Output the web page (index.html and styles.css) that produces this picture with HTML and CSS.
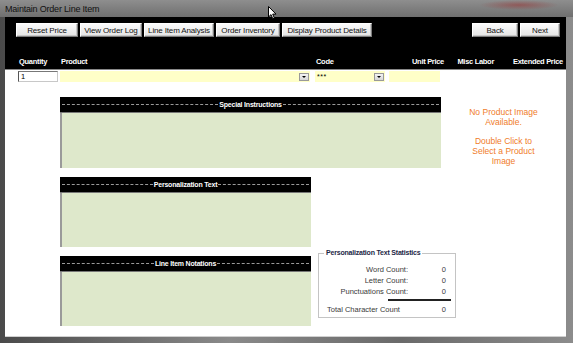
FILE: index.html
```html
<!DOCTYPE html>
<html lang="en">
<head>
    <meta charset="UTF-8">
    <meta name="viewport" content="width=device-width, initial-scale=1.0">
    <title>Maintain Order Line Item</title>
    <link rel="stylesheet" href="styles.css">
</head>
<body>
    <div class="window">
        <div class="titlebar">
            <span class="title">Maintain Order Line Item</span>
            <span class="close-glow"></span>
        </div>
        <div class="client">
            <div class="toolbar">
                <div class="button-row">
                    <div class="button-group">
                        <button class="btn btn-reset">Reset Price</button>
                        <button class="btn btn-log">View Order Log</button>
                        <button class="btn btn-analysis">Line Item Analysis</button>
                        <button class="btn btn-inventory">Order Inventory</button>
                        <button class="btn btn-details">Display Product Details</button>
                    </div>
                    <div class="button-group nav-group">
                        <button class="btn btn-back">Back</button>
                        <button class="btn btn-next">Next</button>
                    </div>
                </div>
                <div class="field-grid label-row">
                    <span class="lbl">Quantity</span>
                    <span class="lbl">Product</span>
                    <span class="lbl">Code</span>
                    <span class="lbl lbl-right">Unit Price</span>
                    <span class="lbl lbl-right">Misc Labor</span>
                    <span class="lbl lbl-right">Extended Price</span>
                </div>
            </div>

            <div class="field-grid input-row">
                <div class="field field-qty">1</div>
                <div class="field field-combo field-product">
                    <span class="combo-text"></span>
                    <span class="combo-arrow"></span>
                </div>
                <div class="field field-combo field-code">
                    <span class="combo-text">***</span>
                    <span class="combo-arrow"></span>
                </div>
                <div class="field field-price"></div>
            </div>

            <div class="content">
                <div class="panel panel-special">
                    <div class="panel-head"><span class="dash"></span><span class="panel-title">Special Instructions</span><span class="dash"></span></div>
                    <div class="panel-body"></div>
                </div>

                <div class="image-note">
                    <p>No Product Image Available.</p>
                    <p>Double Click to Select a Product Image</p>
                </div>

                <div class="panel panel-personal">
                    <div class="panel-head"><span class="dash"></span><span class="panel-title">Personalization Text</span><span class="dash"></span></div>
                    <div class="panel-body"></div>
                </div>

                <div class="panel panel-notes">
                    <div class="panel-head"><span class="dash"></span><span class="panel-title">Line Item Notations</span><span class="dash"></span></div>
                    <div class="panel-body"></div>
                </div>

                <div class="stats">
                    <div class="stats-title">Personalization Text Statistics</div>
                    <div class="stats-grid">
                        <span class="stat-label">Word Count:</span><span class="stat-value">0</span>
                        <span class="stat-label">Letter Count:</span><span class="stat-value">0</span>
                        <span class="stat-label">Punctuations Count:</span><span class="stat-value">0</span>
                        <span class="stat-rule"></span>
                        <span class="stat-label stat-total">Total Character Count</span><span class="stat-value">0</span>
                    </div>
                </div>
            </div>
        </div>

        <svg class="cursor" width="9" height="14" viewBox="0 0 9 14">
            <path d="M0.5 0.5 L0.5 11 L3 8.6 L4.8 12.8 L6.4 12.1 L4.7 8.1 L8 8.1 Z" fill="#fff" stroke="#000" stroke-width="1"/>
        </svg>
    </div>
</body>
</html>
```

FILE: styles.css
```css
body {
    margin: 0;
    font-family: 'Liberation Sans', Arial, sans-serif;
    background-color: #fff;
}

.window {
    position: relative;
    width: 573px;
    height: 343px;
    display: flex;
    flex-direction: column;
    box-sizing: border-box;
    padding: 0 7px 6px 5px;
    background: linear-gradient(to right, #4a4a4a, #8a8a8a 40%, #6a6a6a 70%, #8c8c8c);
}

.titlebar {
    position: relative;
    height: 17px;
    display: flex;
    align-items: center;
    margin: 0 -7px 0 -5px;
    padding-left: 5px;
    background: linear-gradient(to bottom, #8e8e8e, #6f6f6f);
}

.title {
    font-size: 9px;
    color: #111;
    letter-spacing: -0.2px;
}

.close-glow {
    position: absolute;
    right: 14px;
    top: 0;
    width: 80px;
    height: 10px;
    background: radial-gradient(ellipse at center, rgba(150, 60, 60, 0.6), rgba(150, 60, 60, 0) 70%);
}

.client {
    flex: 1;
    display: flex;
    flex-direction: column;
    background-color: #fff;
    border-bottom: 1px solid #d0d0d0;
}

/* Black header */
.toolbar {
    background-color: #000;
    height: 52px;
    display: flex;
    flex-direction: column;
    border-bottom: 1px solid #888;
}

.button-row {
    display: flex;
    justify-content: space-between;
    padding: 6px 6px 0 11px;
}

.button-group {
    display: flex;
    gap: 2px;
}

.btn {
    height: 14px;
    padding: 0;
    font-family: 'Liberation Sans', Arial, sans-serif;
    font-size: 8px;
    letter-spacing: -0.15px;
    color: #111;
    background: linear-gradient(to bottom, #fbfbfb, #e4e4e4);
    border: 1px solid #fff;
    border-right-color: #7c7c7c;
    border-bottom-color: #7c7c7c;
    box-shadow: inset -1px -1px 0 #c8c8c8;
}

.btn-reset { width: 62px; }
.btn-log { width: 62px; }
.btn-analysis { width: 70px; }
.btn-inventory { width: 64px; }
.btn-details { width: 90px; }
.btn-back { width: 46px; }
.btn-next { width: 40px; }

.field-grid {
    display: grid;
    grid-template-columns: 42px 255px 74px 55px 50px 69px;
    padding-left: 13px;
}

.label-row {
    margin-top: auto;
    padding-bottom: 3px;
}

.lbl {
    font-size: 7.5px;
    font-weight: bold;
    color: #fff;
    line-height: 9px;
    letter-spacing: -0.3px;
    padding-left: 1px;
}

.lbl-right {
    text-align: right;
}

/* Inputs */
.input-row {
    margin-top: 1px;
    height: 11px;
}

.field {
    box-sizing: border-box;
    height: 11px;
    font-size: 7.5px;
    line-height: 9px;
    padding-left: 2px;
    color: #000;
}

.field-qty {
    width: 40px;
    border: 1px solid #c8c8c8;
    border-left-color: #555;
    border-top-color: #777;
}

.field-combo {
    display: flex;
    justify-content: space-between;
    align-items: center;
    background-color: #ffffc8;
    padding-right: 1px;
}

.field-product { width: 250px; }
.field-code { width: 70px; }

.combo-text {
    font-size: 7px;
    letter-spacing: 0.5px;
}

.combo-arrow {
    position: relative;
    width: 10px;
    height: 8px;
    background: linear-gradient(to bottom, #f4f4f4, #d6d6d6);
    border: 1px solid #999;
    box-sizing: border-box;
}

.combo-arrow::after {
    content: '';
    position: absolute;
    left: 2px;
    top: 2px;
    border-left: 2px solid transparent;
    border-right: 2px solid transparent;
    border-top: 2px solid #000;
}

.field-price {
    width: 51px;
    background-color: #ffffc8;
}

/* Panels */
.content {
    display: grid;
    grid-template-columns: 251px 130px 1fr;
    grid-template-rows: 71px 71px 71px;
    row-gap: 8px;
    padding: 15px 0 0 55px;
}

.panel {
    display: flex;
    flex-direction: column;
}

.panel-special { grid-column: 1 / 3; grid-row: 1; }
.panel-personal { grid-column: 1; grid-row: 2; margin-top: 1px; }
.panel-notes { grid-column: 1; grid-row: 3; margin-top: 1px; }

.panel-head {
    height: 15px;
    display: flex;
    align-items: center;
    gap: 1px;
    padding: 0 2px;
    background-color: #000;
    border-bottom: 1px solid #777;
}

.dash {
    flex: 1;
    border-top: 1px dashed #9a9a9a;
}

.panel-title {
    font-size: 7px;
    font-weight: bold;
    color: #fff;
    letter-spacing: -0.2px;
}

.panel-body {
    flex: 1;
    background-color: #dee8cb;
    border-left: 2px solid #9a9a9a;
}

.image-note {
    grid-column: 3;
    grid-row: 1;
    text-align: center;
    color: #f07c2a;
    font-size: 8.5px;
    line-height: 10px;
    padding: 10px 0 0 0;
}

.image-note p {
    margin: 0 auto 9px;
    width: 80px;
}

/* Statistics */
.stats {
    position: relative;
    grid-column: 2 / 4;
    grid-row: 3;
    align-self: start;
    width: 138px;
    height: 65px;
    box-sizing: border-box;
    margin: -2px 0 0 7px;
    border: 1px solid #c4c4c4;
}

.stats-title {
    position: absolute;
    top: -5px;
    left: 5px;
    padding: 0 2px;
    background-color: #fff;
    font-size: 7px;
    font-weight: bold;
    color: #1c2746;
    letter-spacing: -0.2px;
}

.stats-grid {
    display: grid;
    grid-template-columns: 89px 38px;
    padding-top: 10px;
    font-size: 7.5px;
    line-height: 11px;
    color: #3a3a3a;
}

.stat-label {
    text-align: right;
}

.stat-value {
    text-align: right;
}

.stat-rule {
    grid-column: 1 / 3;
    margin: 2px 0 3px 69px;
    width: 63px;
    border-top: 2px solid #222;
}

.stat-total {
    text-align: left;
    padding-left: 8px;
    white-space: nowrap;
}

.cursor {
    position: absolute;
    left: 268px;
    top: 6px;
}
```
